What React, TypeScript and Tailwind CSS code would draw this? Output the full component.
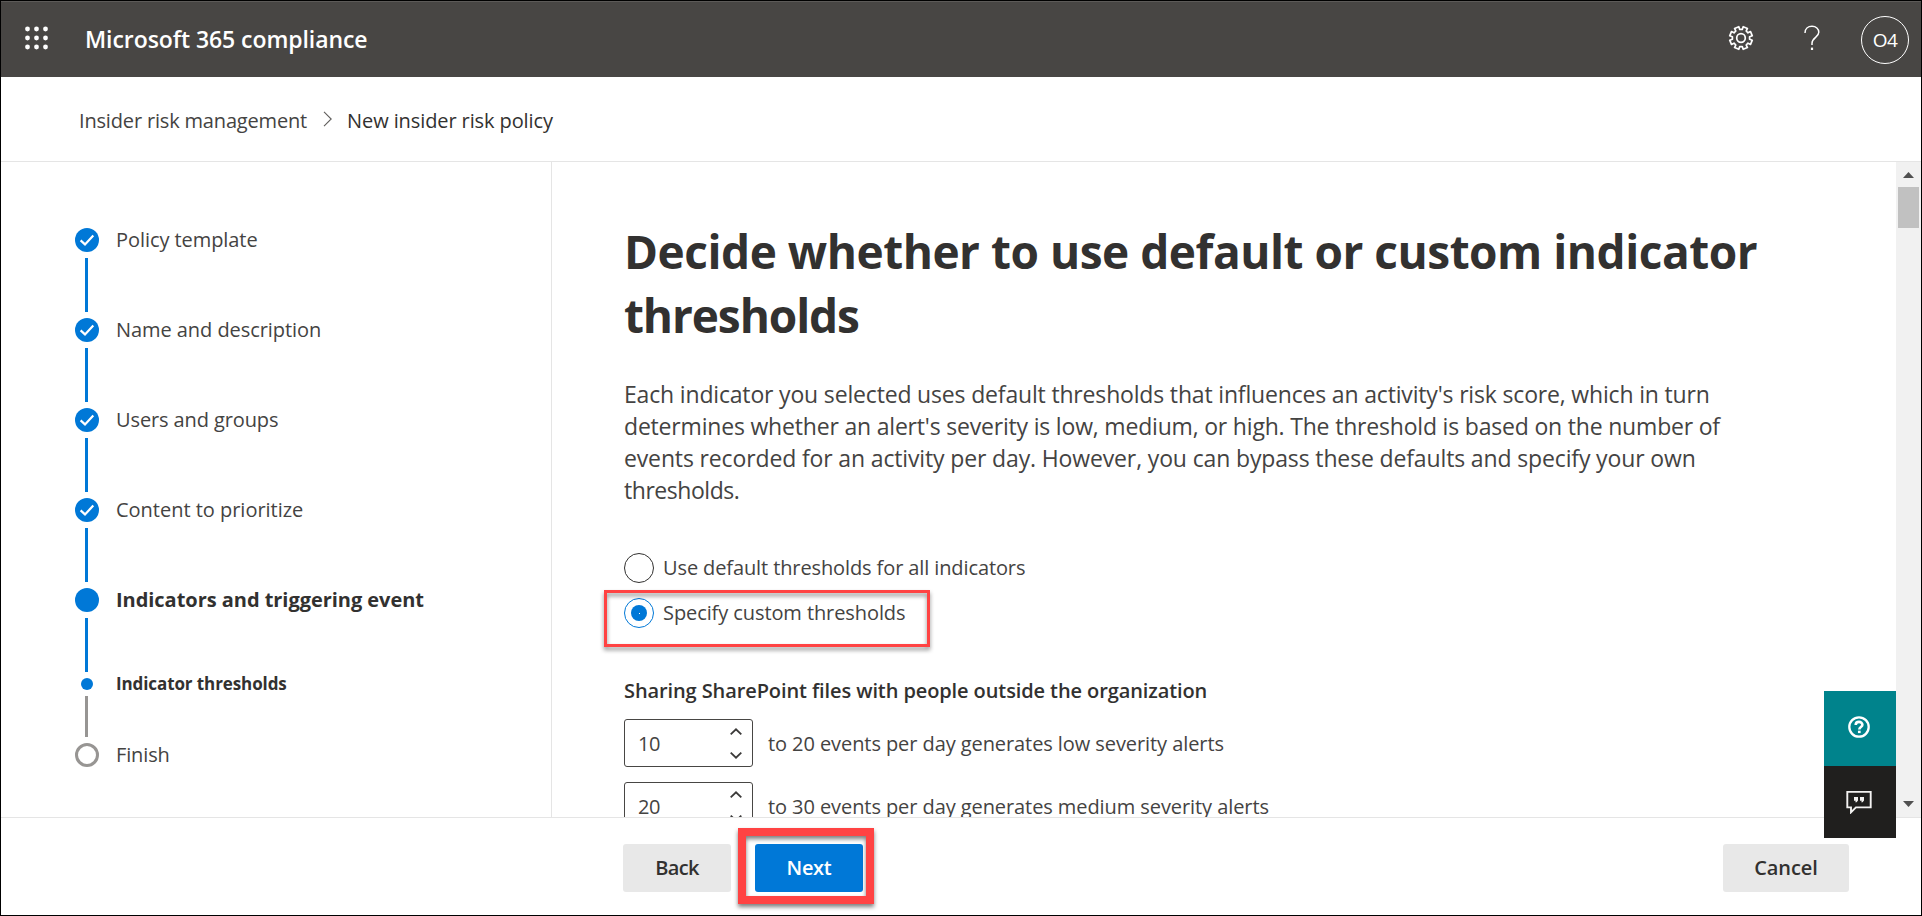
import React from "react";

type Status = "done" | "current" | "sub" | "todo";

const steps: { label: string; status: Status; text: string }[] = [
  { label: "Policy template", status: "done", text: "tracking-[-0.07px]" },
  { label: "Name and description", status: "done", text: "tracking-[-0.06px]" },
  { label: "Users and groups", status: "done", text: "tracking-[-0.11px]" },
  { label: "Content to prioritize", status: "done", text: "tracking-[-0.02px]" },
  { label: "Indicators and triggering event", status: "current", text: "font-bold text-[#323130] tracking-[-0.04px]" },
  { label: "Indicator thresholds", status: "sub", text: "text-[17px] font-bold text-[#323130] tracking-[-0.1px]" },
  { label: "Finish", status: "todo", text: "tracking-[-0.14px]" },
];

function gearPath() {
  const pts: string[] = [];
  const at = (deg: number, r: number) => {
    const a = (deg * Math.PI) / 180;
    return `${(13 + r * Math.cos(a)).toFixed(2)} ${(13 + r * Math.sin(a)).toFixed(2)}`;
  };
  for (let i = 0; i < 8; i++) {
    const c = 22.5 + i * 45;
    pts.push(at(c - 14, 8.7), at(c - 11.5, 11.5), at(c + 11.5, 11.5), at(c + 14, 8.7));
  }
  return `M${pts.join("L")}Z`;
}

function Marker({ status }: { status: Status }) {
  if (status === "done")
    return (
      <svg className="block size-6" viewBox="0 0 24 24">
        <circle cx="12" cy="12" r="12" fill="#0078d7" />
        <path d="M5.6 12.4 10 16.4 18.3 7.6" fill="none" stroke="#fff" strokeWidth="2.2" />
      </svg>
    );
  if (status === "current") return <div className="size-6 rounded-full bg-[#0078d7]" />;
  if (status === "sub") return <div className="size-3 rounded-full bg-[#0078d7]" />;
  return <div className="size-6 rounded-full border-[3px] border-[#979593]" />;
}

function Step({ label, status, text }: { label: string; status: Status; text: string }) {
  return (
    <li>
      <div className={status === "sub" ? "flex h-3 items-center" : "flex h-6 items-center"}>
        <div className="flex w-6 shrink-0 justify-center">
          <Marker status={status} />
        </div>
        <span className={`ml-[17px] whitespace-nowrap ${text}`}>{label}</span>
      </div>
      {status !== "todo" && (
        <div
          className={
            status === "sub"
              ? "my-1.5 ml-2.5 h-[41px] w-[3px] bg-[#979593]"
              : "my-1.5 ml-2.5 h-[54px] w-[3px] bg-[#0078d7]"
          }
        />
      )}
    </li>
  );
}

function Threshold({ value, children }: { value: string; children: React.ReactNode }) {
  return (
    <div className="flex h-12 shrink-0 items-center">
      <div className="flex h-12 w-[129px] items-center justify-between rounded-[3px] border border-[#484644] pr-2.5 pl-[13px]">
        <span className="pt-0.5 tracking-[-0.4px]">{value}</span>
        <svg className="h-[31px] w-3" viewBox="0 0 12 31" fill="none" stroke="#3b3a39" strokeWidth="1.8">
          <path d="M.7 6.4 6 1.3 11.3 6.4M.7 24.6 6 29.7 11.3 24.6" />
        </svg>
      </div>
      <span className="ml-[15px] pt-0.5 whitespace-nowrap tracking-[-0.08px]">{children}</span>
    </div>
  );
}

export default function App() {
  return (
    <div className="relative flex h-[916px] w-[1922px] flex-col overflow-hidden border border-black bg-white font-['Open_Sans','Noto_Sans',sans-serif] text-[20px] text-[#444342]">
      <header className="flex h-[76px] shrink-0 items-center border-t border-[#5c5a58] bg-[#484644] pr-3 pl-[24px] text-white">
        <svg className="-mt-1 size-[24px]" viewBox="0 0 24 24" fill="#fff">
          {[3, 12, 21].map((y) => [2.5, 11.5, 20.5].map((x) => <circle key={`${x}-${y}`} cx={x} cy={y} r="2.4" />))}
        </svg>
        <h1 className="-mt-px ml-9 text-[23px] font-semibold tracking-[-0.07px]">Microsoft 365 compliance</h1>
        <div className="ml-auto flex items-center">
          <svg className="-mt-[3px] size-[26px]" viewBox="0 0 26 26" fill="none" stroke="#fff" strokeWidth="1.7" strokeLinejoin="round">
            <path d={gearPath()} />
            <circle cx="13" cy="13" r="4.3" />
          </svg>
          <svg className="-mt-[3px] ml-[50px] h-[26px] w-4" viewBox="0 0 16 26" fill="none" stroke="#fff" strokeWidth="1.5">
            <path d="M1 8C1 3.8 4 1.3 8 1.3s6.8 2.4 6.8 6c0 5-6.8 5.2-6.8 11V20" />
            <path d="M8 22.6V25" strokeWidth="2.2" />
          </svg>
          <div className="ml-[41px] flex size-12 items-center justify-center rounded-full border border-white pt-0.5 text-[19px] tracking-[-0.5px]">
            O4
          </div>
        </div>
      </header>

      <nav className="flex h-[85px] shrink-0 items-center border-b border-[#e5e5e5] pt-1 pl-[78px]">
        <span className="tracking-[-0.17px]">Insider risk management</span>
        <svg className="-mt-1 ml-4 h-4 w-[9px]" viewBox="0 0 9 16" fill="none" stroke="#605e5c" strokeWidth="1.1">
          <path d="M1 .8 8.2 8 1 15.2" />
        </svg>
        <span className="ml-[15px] tracking-[-0.1px] text-[#323130]">New insider risk policy</span>
      </nav>

      <div className="flex min-h-0 flex-1">
        <aside className="w-[551px] shrink-0 border-r border-[#e5e5e5] pt-[66px] pl-[74px]">
          <ol>
            {steps.map((s) => (
              <Step key={s.label} {...s} />
            ))}
          </ol>
        </aside>

        <main className="flex flex-1 flex-col overflow-hidden pt-[57px] pl-[72px]">
          <h2 className="text-[46px] leading-16 font-bold whitespace-nowrap text-[#323130]">
            <span className="block tracking-[-0.48px]">Decide whether to use default or custom indicator</span>
            <span className="block tracking-[-1.1px]">thresholds</span>
          </h2>
          <p className="mt-[31px] text-[23px] leading-8 whitespace-nowrap">
            <span className="block tracking-[-0.17px]">
              Each indicator you selected uses default thresholds that influences an activity's risk score, which in turn
            </span>
            <span className="block tracking-[-0.19px]">
              determines whether an alert's severity is low, medium, or high. The threshold is based on the number of
            </span>
            <span className="block tracking-[-0.14px]">
              events recorded for an activity per day. However, you can bypass these defaults and specify your own
            </span>
            <span className="block tracking-[-0.45px]">thresholds.</span>
          </p>

          <div className="mt-[47px] flex flex-col gap-[15px]">
            <label className="flex h-[30px] items-center">
              <span className="size-[30px] rounded-full border border-[#323130]" />
              <span className="ml-[9px] tracking-[-0.11px]">Use default thresholds for all indicators</span>
            </label>
            <label className="flex h-[30px] items-center">
              <span className="flex size-[30px] items-center justify-center rounded-full border border-[#0078d7]">
                <span className="flex size-4 items-center justify-center rounded-full bg-[#0078d7]">
                  <span className="size-px bg-white" />
                </span>
              </span>
              <span className="ml-[9px] tracking-[-0.09px]">Specify custom thresholds</span>
            </label>
          </div>

          <h3 className="mt-[49px] leading-7 font-semibold tracking-[-0.1px] text-[#323130]">
            Sharing SharePoint files with people outside the organization
          </h3>
          <div className="mt-3.5 flex flex-col gap-[15px]">
            <Threshold value="10">to 20 events per day generates low severity alerts</Threshold>
            <Threshold value="20">to 30 events per day generates medium severity alerts</Threshold>
          </div>
        </main>

        <div className="flex w-[25px] shrink-0 flex-col items-center bg-[#f1f1f1] pt-2.5 pb-2.5">
          <svg className="h-1.5 w-[11px]" viewBox="0 0 11 6" fill="#505050">
            <path d="M0 6 5.5 0 11 6Z" />
          </svg>
          <div className="mt-[9px] h-[41px] w-[21px] bg-[#c1c1c1]" />
          <svg className="mt-auto h-1.5 w-[11px]" viewBox="0 0 11 6" fill="#505050">
            <path d="M0 0H11L5.5 6Z" />
          </svg>
        </div>
      </div>

      <footer className="flex h-[98px] shrink-0 items-start border-t border-[#e5e5e5] pt-[26px] pr-[72px] pl-[622px] font-semibold text-[#323130]">
        <button className="h-12 w-[108px] rounded-[3px] bg-[#e8e8e8] tracking-[-0.7px]">Back</button>
        <button className="ml-6 h-12 w-[108px] rounded-[3px] bg-[#0078d7] tracking-[-0.3px] text-white">Next</button>
        <button className="ml-auto h-12 w-[126px] rounded-[3px] bg-[#e8e8e8] tracking-[-0.09px]">Cancel</button>
      </footer>

      <div className="absolute top-[589px] left-[603px] h-[57px] w-[326px] border-[3px] border-[#ff4343] drop-shadow-[0_3px_2px_rgba(0,0,0,0.45)]" />
      <div className="absolute top-[827px] left-[737px] h-[76px] w-[136px] border-8 border-[#ff4343] drop-shadow-[0_3px_2px_rgba(0,0,0,0.5)]" />

      <div className="absolute top-[690px] left-[1823px] w-[72px]">
        <div className="flex h-[75px] items-center justify-center bg-[#00838c] pr-0.5 pb-[3px]">
          <svg className="size-[22px]" viewBox="0 0 22 22" fill="none" stroke="#fff">
            <circle cx="11" cy="11" r="9.7" strokeWidth="2.3" />
            <path d="M7.7 9C7.7 6.9 9.1 5.9 11 5.9s3.4 1.1 3.4 2.9c0 2.2-3.1 2.3-3.1 4.7" strokeWidth="2.6" />
            <path d="M11.3 14.7v2.4" strokeWidth="2.7" />
          </svg>
        </div>
        <div className="flex h-[72px] items-center justify-center bg-[#201f1e] pr-0.5">
          <svg className="h-[24px] w-[26px]" viewBox="0 0 26 24" fill="none" stroke="#f3f2f1" strokeWidth="1.9">
            <path d="M1.3 1.9H24.7V17.4H9.9L5 22.3V17.4H1.3Z" />
            <path d="M8 7h4v3.6L10.6 12.3H9.2L9.8 10.8H8ZM14 7h4v3.6L16.6 12.3H15.2L15.8 10.8H14Z" fill="#f3f2f1" stroke="none" />
          </svg>
        </div>
      </div>
    </div>
  );
}
